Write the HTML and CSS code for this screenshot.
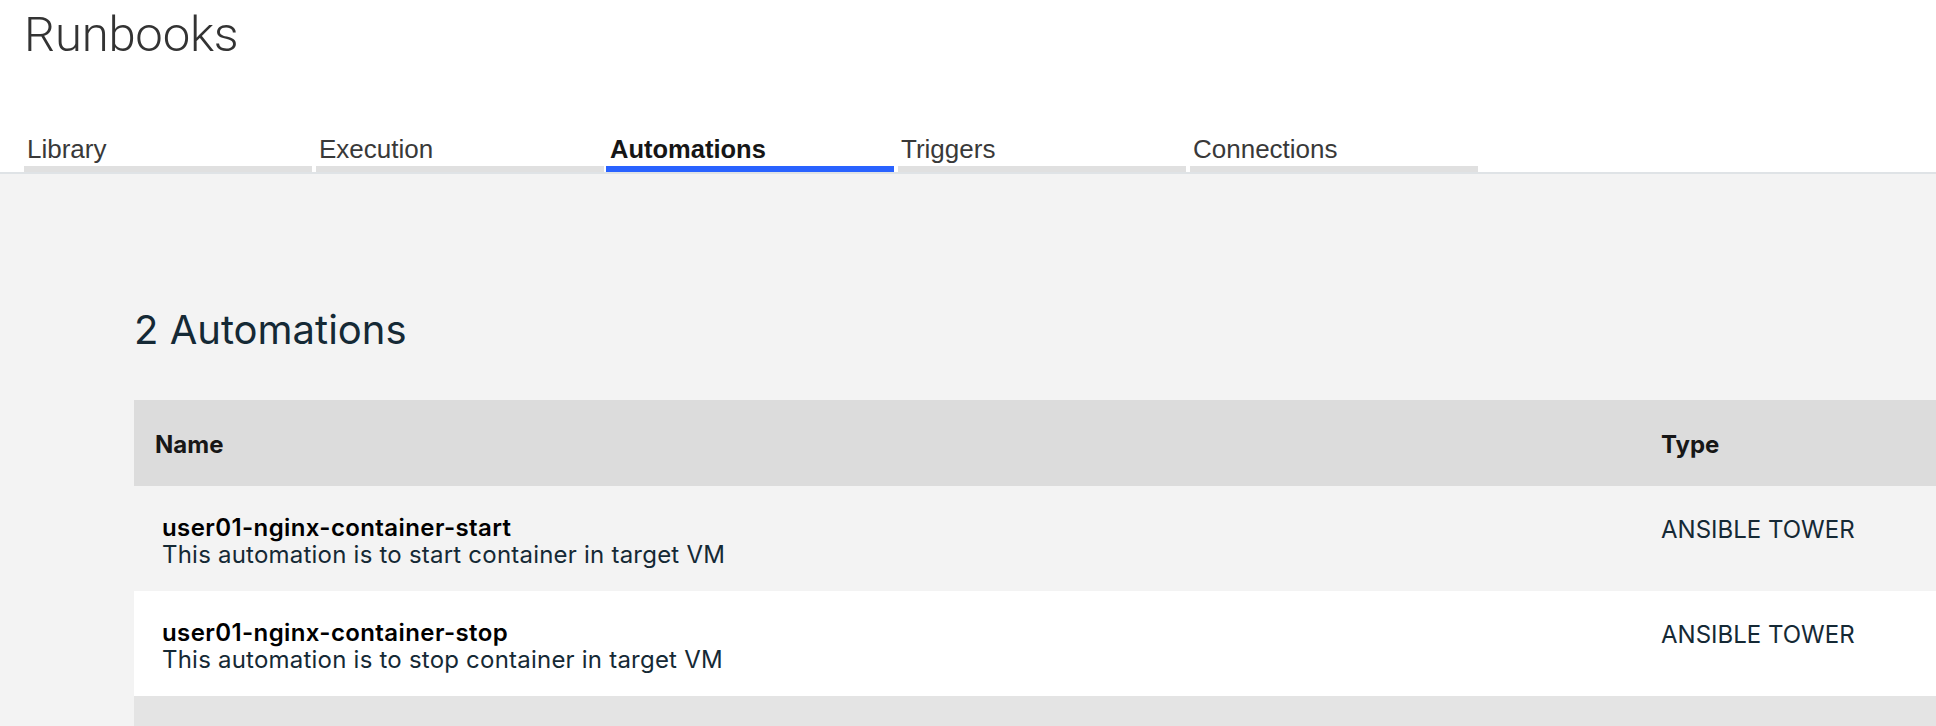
FILE: index.html
```html
<!DOCTYPE html>
<html lang="en">
<head>
<meta charset="utf-8">
<title>Runbooks</title>
<link rel="stylesheet" href="styles.css">
</head>
<body>
<header class="page-header">
  <h1 class="title">Runbooks</h1>
  <nav class="tabs">
    <a class="tab">Library</a>
    <a class="tab">Execution</a>
    <a class="tab tab-active">Automations</a>
    <a class="tab">Triggers</a>
    <a class="tab">Connections</a>
  </nav>
</header>
<main class="content">
  <h2 class="count">2 Automations</h2>
  <div class="table">
    <div class="row row-head">
      <div class="cell cell-name">Name</div>
      <div class="cell cell-type">Type</div>
    </div>
    <div class="row row-odd">
      <div class="cell cell-name">
        <div class="item-name">user01-nginx-container-start</div>
        <div class="item-desc">This automation is to start container in target VM</div>
      </div>
      <div class="cell cell-type">ANSIBLE TOWER</div>
    </div>
    <div class="row row-even">
      <div class="cell cell-name">
        <div class="item-name">user01-nginx-container-stop</div>
        <div class="item-desc">This automation is to stop container in target VM</div>
      </div>
      <div class="cell cell-type">ANSIBLE TOWER</div>
    </div>
    <div class="row row-hover">
      <div class="cell cell-name"></div>
      <div class="cell cell-type"></div>
    </div>
  </div>
</main>
</body>
</html>
```
FILE: styles.css
```css
html, body {
  margin: 0;
  padding: 0;
  height: 100%;
  overflow: hidden;
}
body {
  background: #f3f3f3;
  font-family: Inter, "Noto Sans", sans-serif;
}
.page-header {
  background: #ffffff;
  border-bottom: 2px solid #dfe3e6;
  padding-left: 24px;
}
.title {
  margin: 0;
  padding-top: 5px;
  font-family: Roboto, "Liberation Sans", sans-serif;
  font-weight: 300;
  font-size: 49px;
  line-height: 60px;
  color: #333333;
  letter-spacing: -0.2px;
}
.tabs {
  display: flex;
  gap: 4px;
  margin-top: 69px;
}
.tab {
  width: 288px;
  box-sizing: border-box;
  padding: 0 0 2px 3px;
  font-family: "Liberation Sans", Arial, sans-serif;
  font-size: 26px;
  line-height: 30px;
  color: #393939;
  border-bottom: 6px solid #e0e0e0;
}
.tab-active {
  font-weight: bold;
  font-size: 25.5px;
  color: #161616;
  border-bottom-color: #2962ff;
  margin-left: -2px;
  padding-left: 4px;
}
.content {
  padding: 132px 0 0 134px;
}
.count {
  margin: 0;
  font-size: 40px;
  line-height: 48px;
  font-weight: 400;
  color: #152935;
}
.table {
  margin-top: 46px;
  width: 2000px;
}
.row {
  display: grid;
  grid-template-columns: 1503px 1fr;
  height: 105px;
  box-sizing: border-box;
}
.row-head {
  height: 86px;
  background: #dcdcdc;
}
.row-odd { background: #f3f3f3; }
.row-even { background: #ffffff; }
.row-hover { background: #e4e4e4; }
.cell {
  box-sizing: border-box;
}
.row-head .cell {
  padding-top: 31px;
  font-size: 24px;
  line-height: 28px;
  font-weight: 700;
  color: #171717;
}
.row-head .cell-name { padding-left: 21px; }
.cell-type { padding-left: 24px; }
.row-odd .cell-name,
.row-even .cell-name {
  padding: 28px 0 0 28px;
}
.row-odd .cell-type,
.row-even .cell-type {
  padding-top: 30px;
  font-size: 24px;
  line-height: 27px;
  color: #152935;
}
.item-name {
  font-size: 24px;
  line-height: 27px;
  font-weight: 600;
  letter-spacing: 0.4px;
  color: #000000;
}
.item-desc {
  font-size: 24px;
  line-height: 27px;
  letter-spacing: 0.22px;
  color: #152935;
}
```
